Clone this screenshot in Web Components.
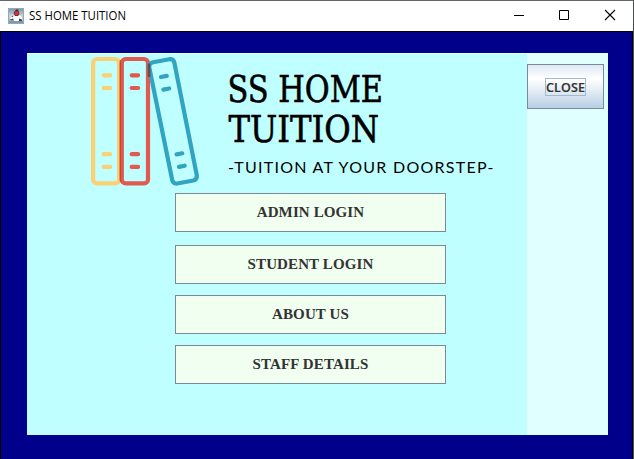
<!DOCTYPE html>
<html lang="en">
<head>
<meta charset="utf-8">
<title>SS HOME TUITION</title>
<style>
html,body{margin:0;height:100%;overflow:hidden}
</style>
</head>
<body>
<app-window></app-window>
<script>
const define = (name, html) => customElements.define(name, class extends HTMLElement {
  constructor() {
    super();
    this.attachShadow({mode: 'open'}).innerHTML = html;
  }
});

define('java-icon', `
<style>:host{display:block;width:16px;height:16px}svg{display:block}</style>
<svg width="16" height="16" viewBox="0 0 16 16">
  <defs><linearGradient id="g" x2="0" y2="1"><stop stop-color="#7d93a4"/><stop offset=".5" stop-color="#c9d7e2"/><stop offset="1" stop-color="#86a0b5"/></linearGradient></defs>
  <rect x=".5" y=".5" width="15" height="15" fill="url(#g)" stroke="#93a8b8"/>
  <path d="M2 11 3.5 8 7 7h4l3 2 .5 4H2z" fill="#fbfcfd"/>
  <path d="M5.5 5 8 1.5h2L11.5 6 10 8H7z" fill="#27313a"/>
  <path d="M2 11.5 5 10.5 6 12.5H2zM11 10.5l3 1v1.5h-3zM3 8.5 5.5 7.5 5 9z" fill="#3a454e"/>
  <circle cx="8.6" cy="5.3" r="2.2" fill="#e52a26"/>
  <path d="M1 13h14v2H1z" fill="#7e98ac"/>
</svg>`);

define('title-bar', `
<style>
:host{display:flex;align-items:center;height:30px;background:#fff;color:#000;padding-left:8px;box-sizing:border-box}
svg{display:block}
.name{margin-left:5px;flex:1}
.controls{display:flex}
</style>
<java-icon></java-icon>
<svg class="name" height="30"><text x="0" y="19" textLength="97" lengthAdjust="spacingAndGlyphs" font-family="'Open Sans','Noto Sans',sans-serif" font-size="12">SS HOME TUITION</text></svg>
<div class="controls">
  <svg width="46" height="30"><path d="M16 14.5h10" stroke="#000"/></svg>
  <svg width="46" height="30"><path d="M15.5 9.5h9v9h-9z" fill="none" stroke="#000"/></svg>
  <svg width="43" height="30"><path d="M15 9l10 10M25 9 15 19" stroke="#000" stroke-width="1.1"/></svg>
</div>`);

define('book-logo', `
<style>:host{display:block;width:120px;height:140px}svg{display:block}</style>
<svg width="120" height="140" viewBox="80 53 120 140" fill="none" stroke-width="4.2" stroke-linecap="round" stroke-linejoin="round">
  <g stroke="#fbcf73"><rect x="93.1" y="59" width="26" height="124.4" rx="4"/><path d="M103.7 75.3h6.4M103.7 88h6.4M103.7 154.2h6.4M103.7 166.9h6.4"/></g>
  <g stroke="#e05a50"><rect x="121.8" y="59" width="26.2" height="124.4" rx="4"/><path d="M131.7 75.3h6.4M131.7 88h6.4M131.7 154.2h6.4M131.7 166.9h6.4"/></g>
  <path d="M120.4 61v120" stroke="#c04b32" stroke-width="1.4"/>
  <g stroke="#30a4c0"><path d="M153 62.2 169.5 59.2Q173.4 58.8 174.3 62.4L196.8 175.4Q197.3 179.5 193.2 180.5L177.2 183.5Q173.2 184 172.2 180L149.2 67.2Q148.6 63 153 62.2Z"/>
  <path d="M161 77 166.8 75.9M163.4 89.6 169.2 88.5M176.6 154.4 182.3 153.3M179 166.9 184.7 165.7"/></g>
  <path d="M149 64.5 149.1 76" stroke="#5b4e55" stroke-width="2.6"/>
</svg>`);

define('brand-text', `
<style>:host{display:block;width:280px;height:140px}svg{display:block}</style>
<svg width="280" height="140" viewBox="227 53 280 140" fill="#000">
  <g font-family="'DejaVu Serif Condensed','DejaVu Serif',serif" font-stretch="condensed" font-size="36.5" stroke="#000" stroke-width=".55">
    <text x="227.5" y="102" textLength="155.5" lengthAdjust="spacingAndGlyphs">SS HOME</text>
    <text x="228.5" y="142" textLength="150.5" lengthAdjust="spacingAndGlyphs">TUITION</text>
  </g>
  <text x="228" y="173.2" textLength="265.5" font-family="Lato,sans-serif" font-size="16">-TUITION AT YOUR DOORSTEP-</text>
</svg>`);

define('menu-button', `
<style>
:host{display:flex;width:271px;height:39px;box-sizing:border-box;border:1px solid #7a8a99;background:#f0fff0;
align-items:center;justify-content:center;font:bold 15px/17px "Liberation Serif",serif;letter-spacing:.12px;color:#333}
</style><slot></slot>`);

define('close-button', `
<style>
:host{display:flex;width:77px;height:45px;box-sizing:border-box;border:1px solid #7a8a99;
background:linear-gradient(#dde8f3 0,#fff 30%,#fff 33%,#b8cfe5 100%);align-items:center;justify-content:center}
span{display:flex;align-items:center;justify-content:center;width:41px;height:18px;box-sizing:border-box;border:1px solid #a3b8cc}
svg{display:block}
</style><span><svg width="39" height="16"><text x="0" y="13" font-family="'Open Sans','Noto Sans',sans-serif" font-weight="600" font-size="12.5" textLength="39" lengthAdjust="spacing" fill="#333" stroke="#333" stroke-width=".2">CLOSE</text></svg></span>`);

define('home-panel', `
<style>
:host{display:grid;grid-template-columns:500px 81px;width:581px;height:382px;background:#e0ffff}
main{background:#c0ffff;margin-top:1px;height:381px}
header{display:flex;height:139px;padding-left:53px;gap:27px}
book-logo,brand-text{margin-top:-1px}
nav{display:flex;flex-direction:column;align-items:flex-start;padding-left:148px;gap:11px}
menu-button:first-child{margin-bottom:2px}
aside{padding-top:11px}
</style>
<main>
  <header><book-logo></book-logo><brand-text></brand-text></header>
  <nav><menu-button>ADMIN LOGIN</menu-button><menu-button>STUDENT LOGIN</menu-button><menu-button>ABOUT US</menu-button><menu-button>STAFF DETAILS</menu-button></nav>
</main>
<aside><close-button></close-button></aside>`);

define('app-window', `
<style>
:host{display:block;width:634px;height:459px;box-sizing:border-box;border-top:1px solid #666;border-right:1px solid #4c5052;background:#00008b}
.client{height:428px;box-sizing:border-box;border:solid #000;border-width:1px 1px 0;background:#00008b;padding:21px 0 0 26px}
</style>
<title-bar></title-bar>
<div class="client"><home-panel></home-panel></div>`);
</script>
</body>
</html>
